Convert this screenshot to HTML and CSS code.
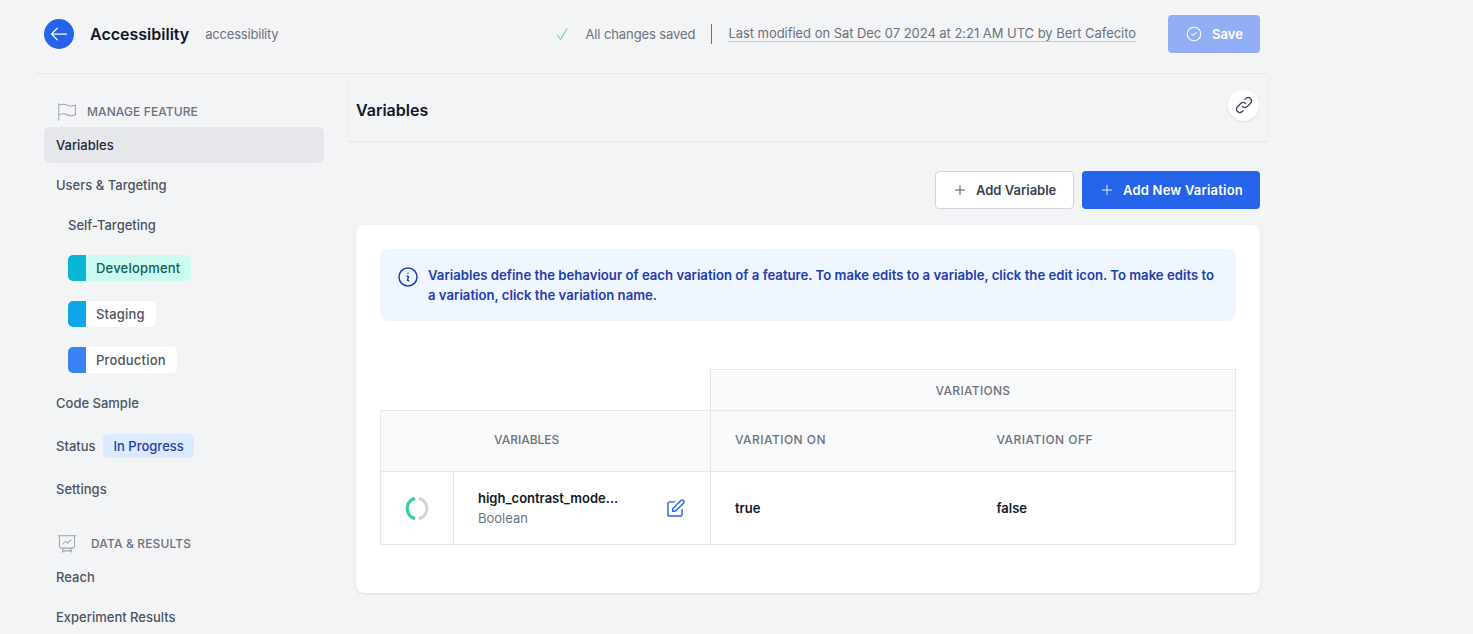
FILE: index.html
```html
<!DOCTYPE html>
<html lang="en">
<head>
    <meta charset="UTF-8">
    <meta name="viewport" content="width=device-width, initial-scale=1.0">
    <title>Accessibility</title>
    <link rel="stylesheet" href="styles.css">
</head>
<body>
<div class="page">
    <!-- top bar -->
    <header class="topbar">
        <div class="topbar-left">
            <a class="back-btn" href="#">
                <svg viewBox="0 0 24 24" class="icon-back"><path d="M10 19l-7-7m0 0l7-7m-7 7h18"/></svg>
            </a>
            <h1 class="feature-name">Accessibility</h1>
            <span class="feature-key">accessibility</span>
        </div>
        <div class="topbar-right">
            <svg viewBox="0 0 24 24" class="icon-saved"><path d="M4 13l5 7L19 3"/></svg>
            <span class="saved-text">All changes saved</span>
            <span class="divider"></span>
            <a class="modified" href="#">Last modified on Sat Dec 07 2024 at 2:21 AM UTC by Bert Cafecito</a>
            <button class="btn-save">
                <svg viewBox="0 0 24 24" class="icon-save"><path d="M9 12l2 2 4-4m6 2a9 9 0 11-18 0 9 9 0 0118 0z"/></svg>
                Save
            </button>
        </div>
    </header>

    <div class="layout">
        <!-- sidebar -->
        <nav class="sidebar">
            <div class="nav-heading">
                <svg viewBox="0 0 24 24" class="icon-heading"><path d="M3 3v1.5M3 21v-6m0 0 2.77-.693a9 9 0 0 1 6.208.682l.108.054a9 9 0 0 0 6.086.71l3.114-.732a48.524 48.524 0 0 1-.005-10.499l-3.11.732a9 9 0 0 1-6.085-.711l-.108-.054a9 9 0 0 0-6.208-.682L3 4.5M3 15V4.5"/></svg>
                <span>MANAGE FEATURE</span>
            </div>
            <a class="nav-item active" href="#">Variables</a>
            <a class="nav-item" href="#">Users &amp; Targeting</a>
            <a class="nav-item sub" href="#">Self-Targeting</a>
            <div class="env-list">
                <a class="env env-dev" href="#"><span class="env-color"></span><span class="env-name">Development</span></a>
                <a class="env env-stg" href="#"><span class="env-color"></span><span class="env-name">Staging</span></a>
                <a class="env env-prod" href="#"><span class="env-color"></span><span class="env-name">Production</span></a>
            </div>
            <a class="nav-item code" href="#">Code Sample</a>
            <div class="nav-item status">Status <span class="status-pill">In Progress</span></div>
            <a class="nav-item" href="#">Settings</a>
            <div class="nav-heading second">
                <svg viewBox="0 0 24 24" class="icon-heading"><path d="M3.75 3v11.25A2.25 2.25 0 0 0 6 16.5h2.25M3.75 3h-1.5m1.5 0h16.5m0 0h1.5m-1.5 0v11.25A2.25 2.25 0 0 1 18 16.5h-2.25m-7.5 0h7.5m-7.5 0-1 3m8.5-3 1 3m0 0 .5 1.5m-.5-1.5h-9.5m0 0-.5 1.5m.75-9 3-3 2.148 2.148A12.061 12.061 0 0 1 16.5 7.605"/></svg>
                <span>DATA &amp; RESULTS</span>
            </div>
            <a class="nav-item" href="#">Reach</a>
            <a class="nav-item" href="#">Experiment Results</a>
        </nav>

        <!-- main content -->
        <main class="main">
            <div class="section-head">
                <h2>Variables</h2>
                <button class="link-btn">
                    <svg viewBox="0 0 24 24" class="icon-link"><path d="M13.828 10.172a4 4 0 00-5.656 0l-4 4a4 4 0 105.656 5.656l1.102-1.101m-.758-4.899a4 4 0 005.656 0l4-4a4 4 0 00-5.656-5.656l-1.1 1.1"/></svg>
                </button>
            </div>

            <div class="actions">
                <button class="btn btn-white">
                    <svg viewBox="0 0 24 24" class="icon-plus"><path d="M12 4v16m8-8H4"/></svg>
                    Add Variable
                </button>
                <button class="btn btn-blue">
                    <svg viewBox="0 0 24 24" class="icon-plus"><path d="M12 4v16m8-8H4"/></svg>
                    Add New Variation
                </button>
            </div>

            <section class="card">
                <div class="info">
                    <svg viewBox="2 2 20 20" class="icon-info"><path d="m11.25 11.25.041-.02a.75.75 0 0 1 1.063.852l-.708 2.836a.75.75 0 0 0 1.063.853l.041-.021M21 12a9 9 0 1 1-18 0 9 9 0 0 1 18 0Zm-9-3.75h.008v.008H12V8.25Z"/></svg>
                    <p>Variables define the behaviour of each variation of a feature. To make edits to a variable, click the edit icon. To make edits to a variation, click the variation name.</p>
                </div>

                <table class="var-table">
                    <colgroup>
                        <col class="col-ring">
                        <col class="col-name">
                        <col class="col-on">
                        <col>
                    </colgroup>
                    <tr class="row-top">
                        <th class="blank" colspan="2"></th>
                        <th class="center" colspan="2">VARIATIONS</th>
                    </tr>
                    <tr class="row-head">
                        <th class="head-vars" colspan="2">VARIABLES</th>
                        <th class="no-right">VARIATION ON</th>
                        <th class="no-left">VARIATION OFF</th>
                    </tr>
                    <tr class="row-body">
                        <td class="ring-cell">
                            <svg viewBox="0 0 24 24" class="ring">
                                <path class="ring-on" d="M10.6 2.3a10 10 0 0 0 0 19.4"/>
                                <path class="ring-off" d="M14.4 2.3a10 10 0 0 1 0 19.4"/>
                            </svg>
                        </td>
                        <td>
                            <div class="var-cell">
                                <div>
                                    <div class="var-name">high_contrast_mode...</div>
                                    <div class="var-type">Boolean</div>
                                </div>
                                <svg viewBox="3 2 19 19" class="icon-edit"><path d="M11 5H6a2 2 0 00-2 2v11a2 2 0 002 2h11a2 2 0 002-2v-5m-1.414-9.414a2 2 0 112.828 2.828L11.828 15H9v-2.828l8.586-8.586z"/></svg>
                            </div>
                        </td>
                        <td class="value no-right">true</td>
                        <td class="value no-left">false</td>
                    </tr>
                </table>
            </section>
        </main>
    </div>
</div>
</body>
</html>
```

FILE: styles.css
```css
* {
    box-sizing: border-box;
}
html, body {
    height: 100%;
}
body {
    margin: 0;
    overflow: hidden;
    background-color: #f3f4f6;
    font-family: Inter, "Noto Sans", sans-serif;
    font-size: 13px;
    color: #4b5563;
}
a {
    color: inherit;
    text-decoration: none;
}
button {
    font-family: inherit;
    cursor: pointer;
}
svg {
    fill: none;
    stroke: currentColor;
    stroke-width: 1.5;
    stroke-linecap: round;
    stroke-linejoin: round;
    flex-shrink: 0;
}

.page {
    width: 1232px;
    margin-left: 36px;
}

/* top bar */
.topbar {
    height: 74px;
    display: flex;
    align-items: center;
    justify-content: space-between;
    padding: 0 8px 5px;
    border-bottom: 1px solid #e5e7eb;
}
.topbar-left, .topbar-right {
    display: flex;
    align-items: center;
}
.back-btn {
    width: 30px;
    height: 30px;
    border-radius: 50%;
    background-color: #2563eb;
    color: #fff;
    display: flex;
    align-items: center;
    justify-content: center;
}
.icon-back {
    width: 20px;
    height: 20px;
}
.feature-name {
    margin: 0 0 0 16px;
    font-size: 16px;
    font-weight: 600;
    color: #111827;
}
.feature-key {
    margin-left: 16px;
    letter-spacing: -0.2px;
    color: #6b7280;
}
.icon-saved {
    width: 15px;
    height: 15px;
    color: #34d399;
}
.saved-text {
    margin-left: 15px;
    letter-spacing: -0.1px;
    color: #6b7280;
}
.divider {
    width: 1px;
    height: 20px;
    margin: 0 16px;
    background-color: #6b7280;
}
.modified {
    color: #6b7280;
    border-bottom: 1px solid #c4c8d0;
    letter-spacing: -0.045px;
    line-height: 15px;
}
.btn-save {
    margin-left: 32px;
    width: 92px;
    height: 38px;
    border: 0;
    border-radius: 4px;
    background-color: #92aef4;
    color: #fff;
    font-size: 13px;
    font-weight: 600;
    display: flex;
    align-items: center;
    justify-content: center;
    gap: 9px;
}
.icon-save {
    width: 18px;
    height: 18px;
    stroke-width: 1.4;
}

/* layout */
.layout {
    display: grid;
    grid-template-columns: 312px 920px;
}

/* sidebar */
.sidebar {
    padding: 26px 24px 0 8px;
}
.nav-heading {
    height: 27px;
    display: flex;
    align-items: center;
    gap: 9px;
    padding: 0 0 4px 12px;
    font-size: 12px;
    font-weight: 500;
    letter-spacing: 0.1px;
    color: #6b7280;
}
.nav-heading.second {
    gap: 13px;
    margin-top: 25px;
    letter-spacing: 0.15px;
}
.icon-heading {
    width: 22px;
    height: 22px;
    color: #9ca3af;
    stroke-width: 1.1;
}
.nav-item {
    display: block;
    height: 36px;
    line-height: 36px;
    margin-bottom: 4px;
    padding-left: 12px;
    border-radius: 6px;
    font-weight: 500;
    color: #4b5563;
}
.nav-item.active {
    background-color: #e5e7eb;
    color: #1f2937;
}
.nav-item.sub {
    padding-left: 24px;
    margin-bottom: 0;
}
.env-list {
    display: flex;
    flex-direction: column;
    align-items: flex-start;
    gap: 20px;
    padding: 12px 0 0 24px;
}
.env {
    display: flex;
    height: 26px;
    border-radius: 5px;
    overflow: hidden;
    background-color: #fff;
    font-weight: 500;
    letter-spacing: 0.2px;
    line-height: 26px;
}
.env-color {
    width: 18px;
}
.env-name {
    padding: 0 11px 0 10px;
}
.env-dev {
    background-color: #ccfbf1;
    color: #115e59;
}
.env-dev .env-color {
    background-color: #06b6d4;
}
.env-stg .env-color {
    background-color: #0ea5e9;
}
.env-prod .env-color {
    background-color: #3b82f6;
}
.nav-item.code {
    margin-top: 12px;
    margin-bottom: 7px;
}
.nav-item.status {
    display: flex;
    align-items: center;
    gap: 7px;
    margin-bottom: 7px;
}
.status-pill {
    height: 24px;
    line-height: 24px;
    padding: 0 10px 0 11px;
    border-radius: 5px;
    background-color: #dbeafe;
    color: #1e40af;
}

/* main */
.section-head {
    height: 67px;
    display: flex;
    align-items: center;
    justify-content: space-between;
    padding: 0 9px 0 8px;
    box-shadow: 0 1px 2px rgba(0, 0, 0, 0.08);
}
.section-head h2 {
    margin: 5px 0 0;
    font-size: 16px;
    font-weight: 600;
    color: #111827;
}
.link-btn {
    width: 31px;
    height: 31px;
    margin-top: -5px;
    padding: 0;
    border: 0;
    border-radius: 50%;
    background-color: #fff;
    color: #374151;
    display: flex;
    align-items: center;
    justify-content: center;
    box-shadow: 0 1px 2px rgba(0, 0, 0, 0.1);
}
.icon-link {
    width: 20px;
    height: 20px;
}
.actions {
    display: flex;
    justify-content: flex-end;
    gap: 8px;
    margin-top: 30px;
    padding-right: 8px;
}
.btn {
    height: 38px;
    display: flex;
    align-items: center;
    gap: 9px;
    padding: 0 0 0 17px;
    border-radius: 4px;
    font-size: 13px;
    font-weight: 600;
}
.btn-white {
    width: 139px;
    background-color: #fff;
    color: #374151;
    border: 1px solid #d1d5db;
}
.btn-blue {
    width: 178px;
    padding-left: 18px;
    background-color: #2563eb;
    color: #fff;
    border: 0;
    letter-spacing: 0.2px;
}
.icon-plus {
    width: 14px;
    height: 14px;
}
.card {
    margin: 16px 8px 0;
    padding: 24px 24px 48px;
    border-radius: 8px;
    background-color: #fff;
    box-shadow: 0 1px 3px rgba(0, 0, 0, 0.1);
}
.info {
    height: 72px;
    display: flex;
    align-items: flex-start;
    gap: 10px;
    padding: 16px 18px;
    border-radius: 8px;
    background-color: #eff6ff;
    color: #1e40af;
}
.icon-info {
    width: 20px;
    height: 20px;
    margin-top: 2px;
}
.info p {
    margin: 0;
    font-size: 13.16px;
    font-weight: 600;
    line-height: 20px;
}

/* variables table */
.var-table {
    width: 856px;
    margin-top: 48px;
    table-layout: fixed;
    border-collapse: collapse;
}
.col-ring {
    width: 73px;
}
.col-name {
    width: 257px;
}
.col-on {
    width: 262px;
}
.var-table th, .var-table td {
    padding: 0 24px;
    border: 1px solid #e5e7eb;
    text-align: left;
}
.var-table th {
    background-color: #f9fafb;
    font-size: 12px;
    font-weight: 500;
    letter-spacing: 0.45px;
    color: #6b7280;
}
.var-table th.blank {
    background-color: #fff;
    border-top: 0;
    border-left: 0;
}
.var-table th.center {
    text-align: center;
    letter-spacing: 0.3px;
}
.var-table th.head-vars {
    padding-left: 113px;
    letter-spacing: 0;
}
.var-table .no-left {
    border-left: 0;
}
.var-table .no-right {
    border-right: 0;
}
.row-top {
    height: 41px;
}
.row-head {
    height: 61px;
}
.row-head th {
    padding-bottom: 4px;
}
.row-body {
    height: 73px;
}
.var-table td.ring-cell {
    padding: 0;
}
.ring {
    display: block;
    width: 25px;
    height: 25px;
    margin-left: 23px;
    stroke-width: 3.2;
    stroke-linecap: butt;
}
.ring-on {
    color: #34d399;
}
.ring-off {
    color: #d1d5db;
}
.var-cell {
    display: flex;
    align-items: center;
    justify-content: space-between;
}
.var-name {
    font-weight: 600;
    color: #111827;
    line-height: 20px;
}
.var-type {
    color: #6b7280;
    line-height: 20px;
}
.icon-edit {
    width: 18px;
    height: 18px;
    margin-right: 1px;
    color: #2563eb;
}
.var-table td.value {
    font-weight: 600;
    color: #111827;
}
```
